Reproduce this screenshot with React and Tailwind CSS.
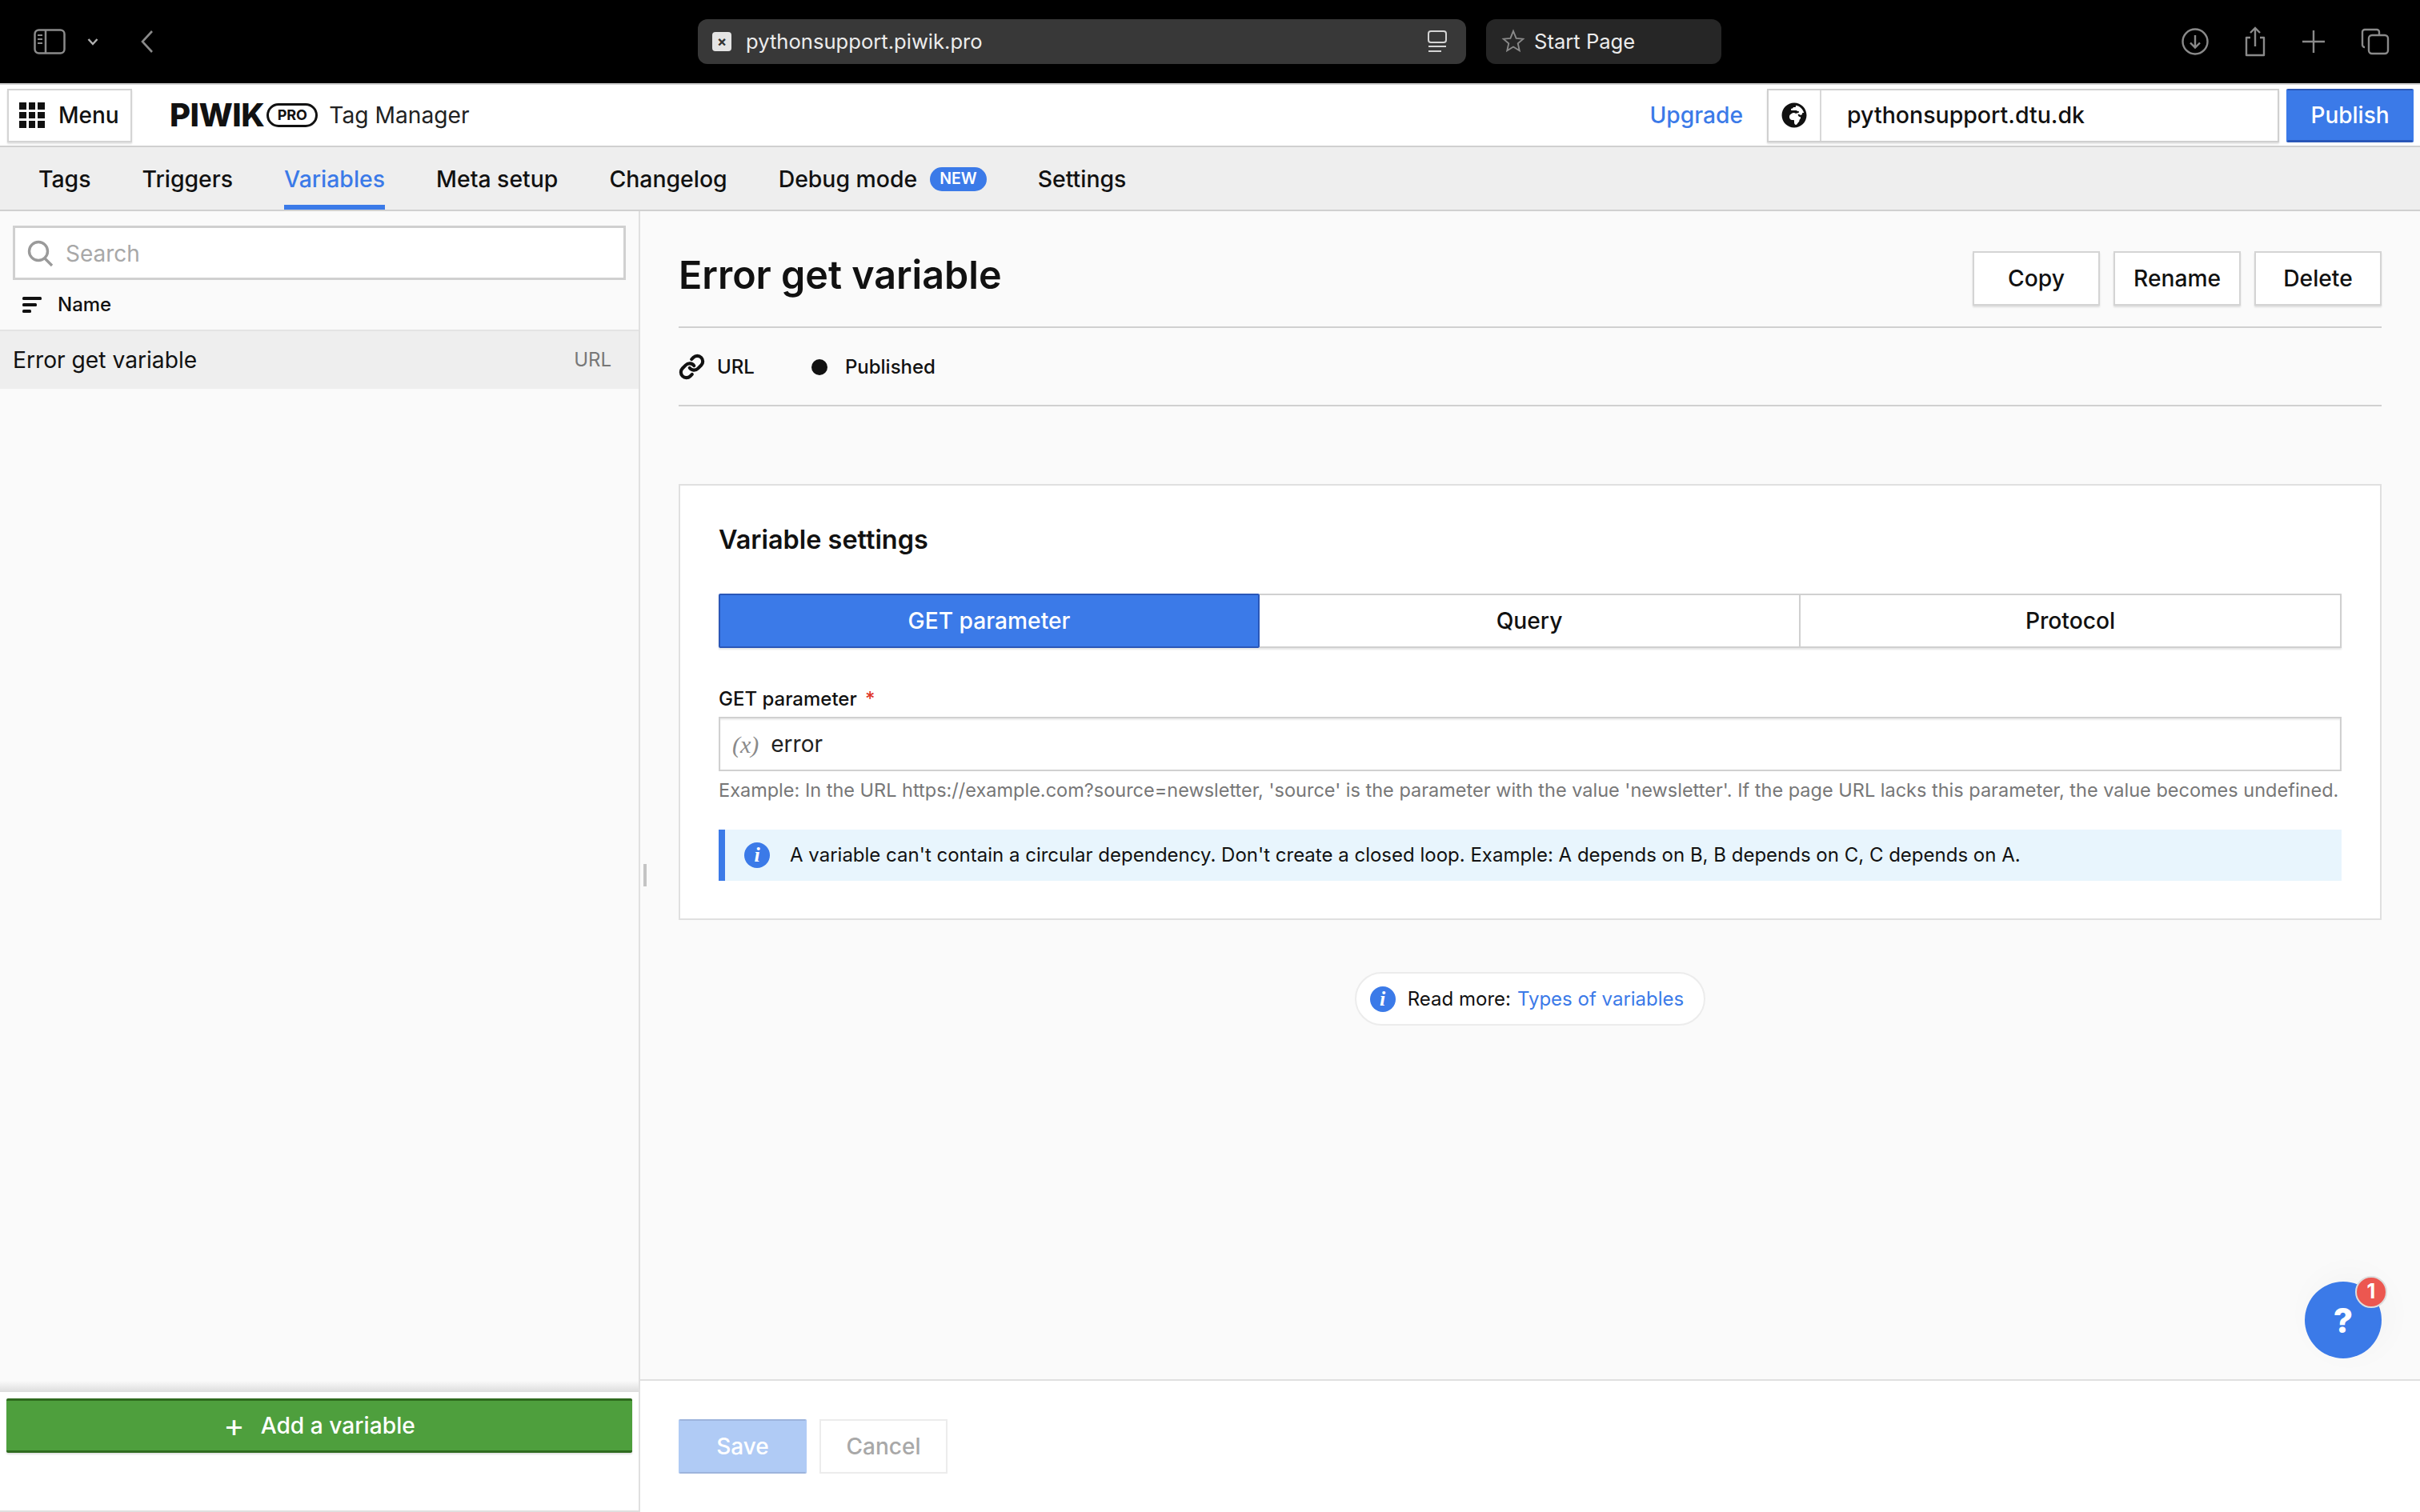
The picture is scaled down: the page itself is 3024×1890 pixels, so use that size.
import React from 'react';
import { FaGlobeAfrica } from 'react-icons/fa';
import { Link } from 'lucide-react';

const InfoDot = () => (
  <span className="flex h-[32px] w-[32px] shrink-0 items-center justify-center rounded-full bg-[#3b7ae8] font-['Liberation_Serif',serif] text-[26px] font-bold italic leading-none text-white">
    i
  </span>
);

const BrowserBar = () => (
  <div className="flex h-[104px] shrink-0 items-center bg-black text-[#8a8a8a]">
    {/* sidebar toggle */}
    <svg className="ml-[42px] h-[32px] w-[40px]" viewBox="0 0 40 32" fill="none" stroke="currentColor" strokeWidth="2.5">
      <rect x="1.5" y="1.5" width="37" height="29" rx="5" />
      <path d="M15 2v28" />
      <path d="M5 8h6M5 13h6M5 18h6" strokeWidth="2" />
    </svg>
    <svg className="ml-[27px] h-[10px] w-[14px]" viewBox="0 0 14 10" fill="none" stroke="#b0b0b0" strokeWidth="2.5">
      <path d="M1.5 2l5.5 6 5.5-6" />
    </svg>
    <svg className="ml-[52px] h-[30px] w-[17px]" viewBox="0 0 17 30" fill="none" stroke="currentColor" strokeWidth="2.6">
      <path d="M15 2L3 15l12 13" />
    </svg>

    <div className="ml-[680px] flex h-[56px] w-[960px] items-center rounded-[12px] bg-[#383838] pl-[18px] pr-[24px]">
      <span className="flex h-[24px] w-[24px] items-center justify-center rounded-[4px] bg-[#e4e4e4] text-[18px] font-bold leading-none text-[#333]">×</span>
      <span className="ml-[18px] flex-1 text-[25.6px] text-[#ececec]">pythonsupport.piwik.pro</span>
      <svg className="h-[28px] w-[24px]" viewBox="0 0 24 28" fill="none" stroke="#d4d4d4" strokeWidth="2">
        <rect x="1" y="1" width="22" height="14" rx="3" />
        <path d="M1 20h22M1 26h16" />
      </svg>
    </div>

    <div className="ml-[25px] flex h-[56px] w-[294px] items-center rounded-[12px] bg-[#262626] pl-[19px]">
      <svg className="h-[32px] w-[30px]" viewBox="0 0 24 24" fill="none" stroke="#8a8a8a" strokeWidth="1.5">
        <path d="M12 1.5l2.9 7.2 6.9.6-5.2 4.6 1.6 7.1L12 17.2l-6.2 3.8 1.6-7.1-5.2-4.6 6.9-.6z" />
      </svg>
      <span className="ml-[11px] text-[25.6px] text-[#ececec]">Start Page</span>
    </div>

    <div className="ml-auto flex items-center">
      <svg className="h-[34px] w-[34px]" viewBox="0 0 34 34" fill="none" stroke="currentColor" strokeWidth="2.4">
        <circle cx="17" cy="17" r="15.5" />
        <path d="M17 9v15M11 18.5l6 6 6-6" />
      </svg>
      <svg className="ml-[43px] h-[38px] w-[30px]" viewBox="0 0 30 38" fill="none" stroke="currentColor" strokeWidth="2.4">
        <path d="M9 14H4v22h22V14h-5" strokeLinejoin="round" />
        <path d="M15 25V2M9 8l6-6 6 6" />
      </svg>
      <svg className="ml-[44px] h-[28px] w-[28px]" viewBox="0 0 28 28" fill="none" stroke="currentColor" strokeWidth="2.4">
        <path d="M14 0v28M0 14h28" />
      </svg>
      <svg className="ml-[45px] mr-[38px] h-[34px] w-[36px]" viewBox="0 0 36 34" fill="none" stroke="currentColor" strokeWidth="2.4">
        <path d="M5 24a3 3 0 01-3-3V5a3 3 0 013-3h15a3 3 0 013 3v3" />
        <rect x="10" y="9" width="24" height="23" rx="4" />
      </svg>
    </div>
  </div>
);

const Header = () => (
  <div className="flex h-[80px] shrink-0 items-center border-y-2 border-y-[#d0d0d0] bg-white pl-[9px] pr-[8px]">
    <button className="flex h-[67px] w-[156px] items-center border-2 border-[#d4d4d4] bg-white pl-[13px] text-[28px] font-medium text-[#111] shadow-[0_2px_2px_rgba(0,0,0,0.12)]">
      <span className="grid w-[32px] grid-cols-3 gap-[3px]">
        {[...Array(9)].map((_, i) => (
          <span key={i} className="h-[8.5px] w-[8.5px] bg-[#111]" />
        ))}
      </span>
      <span className="ml-[17px]">Menu</span>
    </button>
    <div className="ml-[47px] flex items-center">
      <span className="text-[40px] font-extrabold leading-none tracking-[-0.5px] text-[#111]">PIWIK</span>
      <span className="ml-[3px] flex h-[30px] w-[64px] items-center justify-center rounded-full border-[3.5px] border-[#111] text-[18px] font-bold leading-none text-[#111]">PRO</span>
    </div>
    <span className="ml-[14px] text-[28.2px] text-[#222]">Tag Manager</span>

    <span className="ml-auto text-[28.2px] font-medium text-[#3b7ae8]">Upgrade</span>
    <div className="ml-[30px] flex h-[67px] w-[640px] items-center border-2 border-[#d0d0d0] bg-white shadow-[0_2px_2px_rgba(0,0,0,0.12)]">
      <span className="flex h-full w-[66px] items-center justify-center border-r-2 border-r-[#d8d8d8]">
        <FaGlobeAfrica className="h-[32px] w-[32px] text-[#111]" />
      </span>
      <span className="ml-[32px] text-[28.5px] font-medium text-[#111]">pythonsupport.dtu.dk</span>
    </div>
    <button className="ml-[9px] h-[67px] w-[159px] rounded-[2px] border-2 border-[#3b7ae8] border-b-[3px] border-b-[#2a57b8] border-t-[#2a57b8] bg-[#3b7ae8] text-[28px] font-medium text-white">
      Publish
    </button>
  </div>
);

const TABS = ['Tags', 'Triggers', 'Variables', 'Meta setup', 'Changelog', 'Debug mode', 'Settings'];

const TabBar = () => (
  <div className="flex h-[80px] shrink-0 gap-[64px] border-b-2 border-b-[#d0d0d0] bg-[#eeeeee] pl-[48px]">
    {TABS.map(tab => (
      <div
        key={tab}
        className={`flex items-center border-b-[6px] pt-[8px] text-[28.4px] font-medium ${
          tab === 'Variables' ? 'border-b-[#3b7ae8] text-[#3b7ae8]' : 'border-b-transparent text-[#111]'
        }`}
      >
        {tab}
        {tab === 'Debug mode' && (
          <span className="ml-[16px] flex h-[30px] items-center rounded-full bg-[#3b7ae8] px-[12px] text-[19.5px] font-semibold leading-none text-white">NEW</span>
        )}
      </div>
    ))}
  </div>
);

const Sidebar = () => (
  <div className="flex w-[800px] shrink-0 flex-col border-r-2 border-r-[#e0e0e0] bg-[#fafafa]">
    <div className="px-[16px] pt-[18px]">
      <div className="flex h-[68px] items-center border-[3px] border-[#d0d0d0] bg-white pl-[14px] pt-[1px]">
        <svg className="h-[34px] w-[34px]" viewBox="0 0 34 34" fill="none" stroke="#9a9a9a" strokeWidth="3.4">
          <circle cx="15" cy="14" r="11.5" />
          <path d="M23 23l9 9" />
        </svg>
        <span className="ml-[15px] text-[28px] text-[#a8a8a8]">Search</span>
      </div>
    </div>
    <div className="flex h-[64px] items-center border-b-2 border-b-[#e4e4e4] pl-[28px] text-[24px] font-medium text-[#111]">
      <svg className="h-[20px] w-[24px]" viewBox="0 0 24 20" fill="#111">
        <rect x="0" y="0" width="24" height="4" rx="1.5" />
        <rect x="0" y="8" width="18" height="4" rx="1.5" />
        <rect x="0" y="16" width="11" height="4" rx="1.5" />
      </svg>
      <span className="ml-[20px]">Name</span>
    </div>
    <div className="flex h-[72px] items-center justify-between bg-[#eeeeee] pl-[16px] pr-[34px]">
      <span className="text-[28.2px] text-[#111]">Error get variable</span>
      <span className="text-[24px] text-[#777]">URL</span>
    </div>
    <div className="flex-1" />
    <div className="h-[14px] bg-gradient-to-b from-[#fafafa] to-[#dddddd]" />
    <div className="h-[150px] border-b-2 border-b-[#e0e0e0] bg-white px-[8px] pt-[8px]">
      <button className="flex h-[68px] w-full items-center justify-center rounded-[2px] border-y-[3px] border-y-[#2f6b1f] bg-[#4e9f3d] text-[28.2px] font-medium text-white shadow-[0_2px_2px_rgba(0,0,0,0.12)]">
        <span className="mr-[20px] text-[40px] font-normal leading-none">+</span>
        Add a variable
      </button>
    </div>
  </div>
);

const Main = () => (
  <div className="relative flex min-w-0 flex-1 flex-col bg-[#fafafa]">
    <div className="flex-1 px-[48px]">
      <div className="flex h-[146px] items-start justify-between border-b-2 border-b-[#d0d0d0] pt-[50px]">
        <h1 className="mt-[-2px] text-[48.4px] font-semibold leading-[64px] text-[#111]">Error get variable</h1>
        <div className="flex gap-[17px]">
          {['Copy', 'Rename', 'Delete'].map(label => (
            <button key={label} className="h-[68px] w-[159px] border-2 border-[#d4d4d4] bg-white text-[28.2px] font-medium text-[#111] shadow-[0_2px_2px_rgba(0,0,0,0.12)]">
              {label}
            </button>
          ))}
        </div>
      </div>
      <div className="flex h-[98px] items-center border-b-2 border-b-[#d0d0d0] pt-[1px] text-[24px] font-medium text-[#111]">
        <Link className="h-[33px] w-[33px]" strokeWidth={3} />
        <span className="ml-[15px]">URL</span>
        <span className="ml-[71px] h-[20px] w-[20px] rounded-full bg-[#111]" />
        <span className="ml-[22px]">Published</span>
      </div>

      <div className="mt-[97px] border-2 border-[#e0e0e0] bg-white px-[48px] pb-[47px] pt-[46px]">
        <h2 className="text-[32.4px] font-semibold leading-[44px] text-[#111]">Variable settings</h2>
        <div className="mt-[45px] grid h-[68px] grid-cols-3 text-[28.2px] font-medium text-[#111] shadow-[0_2px_2px_rgba(0,0,0,0.1)]">
          <div className="flex items-center justify-center rounded-[2px] border-2 border-[#2a57b8] bg-[#3b7ae8] text-white">GET parameter</div>
          <div className="flex items-center justify-center border-y-2 border-r-2 border-[#d0d0d0]">Query</div>
          <div className="flex items-center justify-center border-y-2 border-r-2 border-[#d0d0d0]">Protocol</div>
        </div>
        <div className="mt-[49px] text-[24px] font-medium leading-[30px] text-[#111]">
          GET parameter <span className="ml-[4px] text-[#e0382c]">*</span>
        </div>
        <div className="mt-[7px] flex h-[68px] items-center border-2 border-[#d0d0d0] bg-white pl-[15px] shadow-[inset_0_2px_2px_rgba(0,0,0,0.08)]">
          <span className="font-['Liberation_Serif',serif] text-[30px] italic text-[#8a8a8a]">(x)</span>
          <span className="ml-[15px] text-[28px] text-[#222]">error</span>
        </div>
        <p className="mt-[8px] whitespace-nowrap text-[23.5px] leading-[32px] text-[#777]">
          Example: In the URL https://example.com?source=newsletter, 'source' is the parameter with the value 'newsletter'. If the page URL lacks this parameter, the value becomes undefined.
        </p>
        <div className="mt-[33px] flex h-[64px] items-center border-l-[8px] border-l-[#3b7ae8] bg-[#e8f5fd] pl-[24px] text-[24px] text-[#111]">
          <InfoDot />
          <span className="ml-[25px]">A variable can't contain a circular dependency. Don't create a closed loop. Example: A depends on B, B depends on C, C depends on A.</span>
        </div>
      </div>

      <div className="mt-[65px] flex justify-center">
        <div className="flex h-[67px] items-center rounded-full border-2 border-[#ececec] bg-white pl-[17px] pr-[25px] text-[24px] text-[#111]">
          <InfoDot />
          <span className="ml-[15px]">Read more:</span>
          <span className="ml-[8px] text-[#3b7ae8]">Types of variables</span>
        </div>
      </div>
    </div>

    <div className="flex h-[166px] shrink-0 gap-[16px] border-t-2 border-t-[#e0e0e0] bg-white pl-[48px] pt-[48px]">
      <button className="h-[68px] w-[160px] rounded-[2px] border-2 border-[#b0cbf5] border-b-[#9db4dc] border-t-[#9db4dc] bg-[#b0cbf5] text-[28px] font-medium text-white">Save</button>
      <button className="h-[68px] w-[160px] border-2 border-[#ececec] bg-white text-[28px] font-medium text-[#a8a8a8]">Cancel</button>
    </div>

    {/* resize grip */}
    <span className="absolute left-[4px] top-[816px] h-[28px] w-[4px] bg-[#c4c4c4]" />

    {/* help bubble */}
    <div className="absolute left-[2080px] top-[1338px] flex h-[96px] w-[96px] items-center justify-center rounded-full bg-[#3b7ae8] text-[42px] font-extrabold text-white shadow-[8px_-8px_40px_rgba(0,0,0,0.03)]">
      ?
      <span className="absolute left-[63px] top-[-7px] flex h-[40px] w-[40px] items-center justify-center rounded-full border-2 border-[#dddddd] bg-[#ec5750] text-[25px] font-bold text-white">1</span>
    </div>
  </div>
);

export default function App() {
  return (
    <div className="flex h-screen w-full flex-col overflow-hidden bg-[#fafafa] font-['Inter',sans-serif]">
      <BrowserBar />
      <Header />
      <TabBar />
      <div className="flex min-h-0 flex-1">
        <Sidebar />
        <Main />
      </div>
    </div>
  );
}
